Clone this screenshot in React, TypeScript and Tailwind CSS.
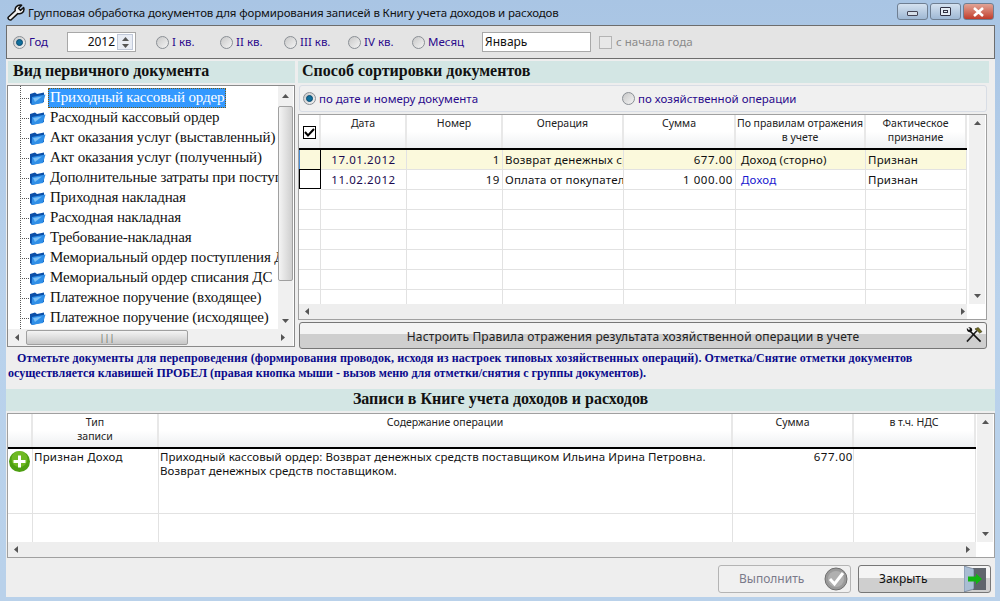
import React from "react";

const treeItems = [
  "Приходный кассовый ордер",
  "Расходный кассовый ордер",
  "Акт оказания услуг (выставленный)",
  "Акт оказания услуг (полученный)",
  "Дополнительные затраты при поступлении",
  "Приходная накладная",
  "Расходная накладная",
  "Требование-накладная",
  "Мемориальный ордер поступления ДС",
  "Мемориальный ордер списания ДС",
  "Платежное поручение (входящее)",
  "Платежное поручение (исходящее)",
];

function Radio({ on, label, className }: { on?: boolean; label: string; className?: string }) {
  return (
    <div className={"flex items-center gap-[3px] text-[11.5px] text-[#2a0a8c] whitespace-nowrap " + (className || "")}>
      <span className="w-[13px] h-[13px] rounded-full border border-[#8a8f95] bg-gradient-to-br from-[#c8c8c8] to-[#f4f4f4] flex items-center justify-center shrink-0">
        {on && <span className="w-[7px] h-[7px] rounded-full bg-[#0f6f9c] border border-[#0a4a70]" />}
      </span>
      <span>{label}</span>
    </div>
  );
}

function Arrow({ dir }: { dir: "up" | "down" | "left" | "right" }) {
  const pts = { up: "0,4 7,4 3.5,0", down: "0,0 7,0 3.5,4", left: "4,0 4,7 0,3.5", right: "0,0 0,7 4,3.5" }[dir];
  const vert = dir === "up" || dir === "down";
  return (
    <svg width={vert ? 7 : 4} height={vert ? 4 : 7} viewBox={vert ? "0 0 7 4" : "0 0 4 7"}>
      <polygon points={pts} fill="#555" />
    </svg>
  );
}

function Folder() {
  return (
    <svg width="17" height="15" viewBox="0 0 17 15" className="shrink-0">
      <path d="M1 3 L6 1.5 L8 3 L15 1.5 L15 11 L3 14 L1 12 Z" fill="#0b4fa8" />
      <path d="M3 6 L16.5 3.5 L14 12 L2.5 14 Z" fill="#2f8fe8" />
      <path d="M4 7 L13 5.5 L6 11 Z" fill="#7cc0f5" />
    </svg>
  );
}

function Tree() {
  return (
    <div className="w-[288px] h-[262px] mt-[2px] ml-px border border-[#8a8a8a] bg-white flex flex-col">
      <div className="flex h-[243px]">
        <div className="w-[270px] overflow-hidden pt-[2px] relative font-['Liberation_Serif'] text-[15px] tracking-[-0.15px] text-[#111]">
          <div className="absolute left-[12px] top-0 h-[243px] border-l border-dotted border-[#555]" />
          {treeItems.map((t, i) => (
            <div key={t} className="h-[20px] flex items-center whitespace-nowrap">
              <div className="w-[9px] ml-[12px] border-t border-dotted border-[#555] shrink-0" />
              <Folder />
              <span
                className={
                  "ml-[2px] px-[2px] h-[20px] leading-[19px] " +
                  (i === 0 ? "bg-[#3399ff] text-white outline-1 outline-dotted outline-[#7a5a10] -outline-offset-1" : "")
                }
              >
                {t}
              </span>
            </div>
          ))}
        </div>
        <div className="w-[15px] ml-auto mr-px bg-[#f0f0f0] flex flex-col items-center">
          <div className="h-[20px] flex items-center justify-center"><Arrow dir="up" /></div>
          <div className="w-[15px] h-[175px] rounded-[2px] border border-[#a0a0a0] bg-gradient-to-r from-[#f4f4f4] to-[#cfcfcf]" />
          <div className="mt-auto h-[17px] flex items-center justify-center"><Arrow dir="down" /></div>
        </div>
      </div>
      <div className="h-[17px] bg-[#f0f0f0] flex items-center mr-[1px]">
        <div className="w-[18px] flex justify-center"><Arrow dir="left" /></div>
        <div className="w-[162px] h-[15px] rounded-[2px] border border-[#a0a0a0] bg-gradient-to-b from-[#f4f4f4] to-[#c8c8c8] flex items-center justify-center text-[9px] leading-none text-[#666]">
          |||
        </div>
        <div className="ml-auto w-[20px] flex justify-center"><Arrow dir="right" /></div>
      </div>
    </div>
  );
}

function HeadCell({ children, className }: { children?: React.ReactNode; className?: string }) {
  return (
    <div className={"border-r-2 border-[#e8e8e8] bg-gradient-to-b from-white via-white to-[#eef0f2] text-center text-[10.5px] leading-[14px] pt-[1px] text-[#222] overflow-hidden " + (className || "")}>
      {children}
    </div>
  );
}

function Cell({ children, className }: { children?: React.ReactNode; className?: string }) {
  return (
    <div className={"border-r border-b border-[#e2e2e2] h-[20px] leading-[19px] text-[11.5px] whitespace-nowrap overflow-hidden " + (className || "tracking-[0.2px] text-[#111]")}>
      {children}
    </div>
  );
}

function VBar({ className }: { className?: string }) {
  return (
    <div className={"w-[16px] bg-[#f0f0f0] flex flex-col items-center justify-between py-[6px] " + (className || "")}>
      <Arrow dir="up" />
      <Arrow dir="down" />
    </div>
  );
}

function HBar({ className }: { className?: string }) {
  return (
    <div className={"h-[15px] bg-[#eeeeee] flex items-center justify-between shrink-0 " + (className || "")}>
      <Arrow dir="left" />
      <Arrow dir="right" />
    </div>
  );
}

function DocGrid() {
  const cols = "grid grid-cols-[22px_86px_96px_121px_112px_130px_101px]";
  const rows = [
    { d: "17.01.2012", n: "1", o: "Возврат денежных средств поставщику", s: "677.00", r: "Доход (сторно)", f: "Признан", hl: true },
    { d: "11.02.2012", n: "19", o: "Оплата от покупателя", s: "1 000.00", r: "Доход", f: "Признан", hl: false },
  ];
  return (
    <div className="w-[689px] h-[206px] mt-[2px] border border-[#a0a0a0] bg-white flex flex-col">
      <div className="flex flex-1 min-h-0">
        <div className="w-[668px]">
          <div className={cols + " h-[33px]"}>
            <HeadCell className="flex items-center justify-center pt-0">
              <span className="w-[13px] h-[13px] border border-black bg-white flex items-center justify-center">
                <svg width="11" height="9" viewBox="0 0 11 9"><path d="M1 4 L4 7.5 L10 1" stroke="#000" strokeWidth="2" fill="none" /></svg>
              </span>
            </HeadCell>
            <HeadCell>Дата</HeadCell>
            <HeadCell>Номер</HeadCell>
            <HeadCell>Операция</HeadCell>
            <HeadCell>Сумма</HeadCell>
            <HeadCell>По правилам отражения<br />в учете</HeadCell>
            <HeadCell>Фактическое<br />признание</HeadCell>
          </div>
          <div className="border-t-2 border-black" />
          {rows.map((r) => (
            <div key={r.d} className={cols + " " + (r.hl ? "bg-[#fbf9dc] border-b border-[#4a90d9] h-[20px]" : "")}>
              <div className={r.hl ? "h-[19px] border-l border-l-[#4a90d9] border-r border-r-black" : "h-[20px] border border-black mt-[-1px] bg-white"} />
              <Cell className="text-center text-[#1a0a50] tracking-[0.55px]">{r.d}</Cell>
              <Cell className="text-right pr-[2px] text-[#111] tracking-[0.55px]">{r.n}</Cell>
              <Cell className="pl-[2px] text-[#111] tracking-[0.2px]">{r.o}</Cell>
              <Cell className="text-right pr-[2px] text-[#111] tracking-[0.55px]">{r.s}</Cell>
              <Cell className={"pl-[5px] tracking-[0.2px] " + (r.hl ? "text-[#111]" : "text-[#1a1ad0]")}>{r.r}</Cell>
              <Cell className="pl-[2px] text-[#111] tracking-[0.2px]">{r.f}</Cell>
            </div>
          ))}
          {[0, 1, 2, 3, 4, 5].map((i) => (
            <div key={i} className={cols}>
              {[0, 1, 2, 3, 4, 5, 6].map((j) => <Cell key={j} />)}
            </div>
          ))}
        </div>
        <VBar className="ml-[2px]" />
      </div>
      <HBar className="mr-[19px] pl-[6px] pr-[2px]" />
    </div>
  );
}

function RecGrid() {
  const cols = "grid grid-cols-[25px_126px_574px_121px_122px]";
  const txt = "border-r border-[#e2e2e2] text-[11.5px] leading-[14px] pt-[1px] text-[#111]";
  return (
    <div className="w-[988px] h-[145px] mt-[2px] ml-px border border-[#a0a0a0] bg-white flex flex-col">
      <div className="flex flex-1 min-h-0">
        <div className="w-[968px] overflow-hidden">
          <div className={cols + " h-[33px]"}>
            <HeadCell />
            <HeadCell>Тип<br />записи</HeadCell>
            <HeadCell>Содержание операции</HeadCell>
            <HeadCell>Сумма</HeadCell>
            <HeadCell>в т.ч. НДС</HeadCell>
          </div>
          <div className="border-t-2 border-black" />
          <div className={cols + " h-[65px] border-b border-[#e2e2e2]"}>
            <div className="border-r border-[#e2e2e2] pl-[1px] pt-[2px]">
              <svg width="21" height="21" viewBox="0 0 21 21">
                <circle cx="10.5" cy="10.5" r="10.5" fill="#4e9f12" />
                <circle cx="10.5" cy="8" r="8" fill="#7ec52a" opacity="0.7" />
                <path d="M9 4.5h3v4.5h4.5v3H12v4.5H9V12H4.5V9H9z" fill="#fff" />
              </svg>
            </div>
            <div className={txt + " pl-[1px] tracking-[0.2px]"}>Признан Доход</div>
            <div className={txt + " pl-[1px] tracking-[0.08px]"}>
              Приходный кассовый ордер: Возврат денежных средств поставщиком Ильина Ирина Петровна.<br />
              Возврат денежных средств поставщиком.
            </div>
            <div className={txt + " text-right tracking-[0.55px]"}>677.00</div>
            <div className="border-r border-[#e2e2e2]" />
          </div>
          <div className={cols + " h-[28px]"}>
            {[0, 1, 2, 3, 4].map((j) => <div key={j} className="border-r border-[#e2e2e2]" />)}
          </div>
        </div>
        <VBar className="ml-auto mr-px" />
      </div>
      <HBar className="mr-[18px] pl-[6px] pr-[6px]" />
    </div>
  );
}

function Wrench() {
  return (
    <svg width="18" height="17" viewBox="0 0 18 17" className="shrink-0">
      <path
        d="M1.2 13.2 L8.2 6.8 C7.6 3.8 9.8 0.8 13.6 0.9 L14.6 1.2 L11.6 4.2 L13.4 6.4 L16.6 3.6 L17 5 C17.2 8.4 13.8 10.6 10.8 9.6 L4.2 15.8 C3 16.6 0.4 15 1.2 13.2 Z"
        fill="#f2f2f2"
        stroke="#111"
        strokeWidth="1.5"
        strokeLinejoin="round"
      />
    </svg>
  );
}

function WinBtn({ children, className }: { children: React.ReactNode; className?: string }) {
  return (
    <div className={"w-[31px] h-[17px] rounded-[3px] border border-[#6f7f92] flex items-center justify-center " + (className || "")}>
      {children}
    </div>
  );
}

export default function App() {
  return (
    <div className="w-[1000px] h-[601px] bg-gradient-to-b from-[#a9c5e4] via-[#b9d2ec] to-[#b9d1ea] font-['Noto_Sans','Liberation_Sans',sans-serif] overflow-hidden flex flex-col">
      <div className="h-[25px] flex items-center pl-[7px] pr-[6px] shrink-0">
        <Wrench />
        <span className="ml-[3px] text-[11.5px] text-[#111] tracking-[-0.13px] whitespace-nowrap">
          Групповая обработка документов для формирования записей в Книгу учета доходов и расходов
        </span>
        <div className="ml-auto flex gap-[2px] mt-[-2px]">
          <WinBtn className="bg-gradient-to-b from-[#d5e2f0] to-[#9fb8d4]">
            <span className="w-[11px] h-[5px] mt-[4px] border border-[#445] bg-[#d6dfe9] rounded-[1px]" />
          </WinBtn>
          <WinBtn className="bg-gradient-to-b from-[#d5e2f0] to-[#9fb8d4]">
            <span className="w-[11px] h-[9px] border border-[#334] bg-[#e4ecf4] rounded-[1px] flex items-center justify-center">
              <span className="w-[5px] h-[3px] border border-[#334]" />
            </span>
          </WinBtn>
          <WinBtn className="border-[#6e2a22] bg-gradient-to-b from-[#e0a396] to-[#c03a2a]">
            <svg width="13" height="10" viewBox="0 0 13 10"><path d="M2 1 L11 9 M11 1 L2 9" stroke="#fff" strokeWidth="2.6" /></svg>
          </WinBtn>
        </div>
      </div>

      <div className="mx-[6px] w-[989px] h-[572px] bg-[#eeeeee] flex flex-col shrink-0">
        <div className="h-[34px] border border-[#6d6d6d] bg-[#e4e4e4] flex items-center pl-[6px] shrink-0">
          <Radio on label="Год" />
          <div className="ml-[19px] w-[69px] h-[20px] border border-[#a8a8a8] bg-white flex items-center justify-end">
            <span className="text-[12px] text-[#111] pr-[2px]">2012</span>
            <div className="w-[16px] h-[16px] mr-[2px] flex flex-col items-center border border-[#c0c8d8] bg-[#e8ecf4]">
              <div className="h-[7px] flex items-center"><Arrow dir="up" /></div>
              <div className="h-[7px] flex items-center"><Arrow dir="down" /></div>
            </div>
          </div>
          <Radio label="I кв." className="ml-[20px] w-[64px]" />
          <Radio label="II кв." className="w-[64px]" />
          <Radio label="III кв." className="w-[64px]" />
          <Radio label="IV кв." className="w-[64px]" />
          <Radio label="Месяц" className="w-[70px]" />
          <div className="w-[109px] h-[20px] border border-[#a8a8a8] bg-white text-[12px] text-[#111] leading-[18px] pl-[2px]">Январь</div>
          <span className="ml-[8px] w-[13px] h-[13px] border border-[#b4b4b4] bg-[#e8e8e8]" />
          <span className="ml-[4px] text-[11.5px] text-[#8a8a8a]">с начала года</span>
        </div>

        <div className="flex">
          <div className="w-[292px] shrink-0">
            <div className="h-[22px] mt-[2px] ml-[2px] w-[287px] bg-[#d3e6e4] font-['Liberation_Serif'] font-bold text-[16px] leading-[20px] pl-[5px] text-[#111]">
              Вид первичного документа
            </div>
            <Tree />
          </div>
          <div className="w-[691px]">
            <div className="h-[22px] mt-[2px] bg-[#d3e6e4] font-['Liberation_Serif'] font-bold text-[16px] leading-[20px] pl-[4px] text-[#111]">
              Способ сортировки документов
            </div>
            <div className="h-[27px] mt-[2px] ml-px w-[688px] border border-[#d8dde5] rounded-[3px] bg-[#f0f0f0] flex items-center pl-[3px]">
              <Radio on label="по дате и номеру документа" />
              <Radio label="по хозяйственной операции" className="ml-[144px]" />
            </div>
            <DocGrid />
            <div className="h-[27px] mt-[2px] ml-px w-[688px] border border-[#777] rounded-[3px] bg-gradient-to-b from-[#f4f4f4] from-45% to-[#cfcfcf] to-45% flex items-center text-[12px] text-[#222] relative">
              <span className="flex-1 text-center pr-[20px] pt-[2px] tracking-[0.14px]">Настроить Правила отражения результата хозяйственной операции в учете</span>
              <svg width="18" height="16" viewBox="0 0 18 17" className="absolute right-[3px] top-[4px]">
                <path d="M10 2 L13.5 0.5 L17.5 5 L15 6.5 L13 4.5 Z" fill="#6f6a1e" stroke="#2a2a10" strokeWidth="0.6" />
                <path d="M12 4 L1.5 15.5" stroke="#222" strokeWidth="1.7" />
                <path d="M16 15.5 L5 4.5" stroke="#111" strokeWidth="1.8" />
                <path d="M5.5 5.5 C2.5 6 0.8 3.5 1.5 1 L3.5 3.2 L5 2 L3 0.4 C6 -0.2 7.6 2 7 4 Z" fill="#111" />
              </svg>
            </div>
          </div>
        </div>

        <div className="mt-[2px] h-[38px] pl-[2px] font-['Liberation_Serif'] font-bold text-[12px] leading-[15px] text-[#0a0a8c]">
          <div className="pl-[9px] whitespace-nowrap tracking-[0.09px]">Отметьте документы для перепроведения (формирования проводок, исходя из настроек типовых хозяйственных операций). Отметка/Снятие отметки документов</div>
          <div className="whitespace-nowrap tracking-[0.01px]">осуществляется клавишей ПРОБЕЛ (правая кнопка мыши - вызов меню для отметки/снятия с группы документов).</div>
        </div>

        <div className="h-[22px] bg-[#d3e6e4] font-['Liberation_Serif'] font-bold text-[16px] leading-[20px] text-center text-[#111] shrink-0">
          Записи в Книге учета доходов и расходов
        </div>
        <RecGrid />

        <div className="flex justify-end gap-[7px] mt-[7px] pr-[4px]">
          <div className="w-[133px] h-[28px] rounded-[3px] border border-[#b4b4b4] bg-[#f0f0f0] flex items-center text-[12px] text-[#7a7a8a] relative">
            <span className="ml-[20px]">Выполнить</span>
            <svg width="24" height="24" viewBox="0 0 24 24" className="absolute right-[2px] top-[1px]">
              <circle cx="12" cy="12" r="11" fill="#9a9a9a" stroke="#6f6f6f" />
              <circle cx="12" cy="12" r="8" fill="#b0b0b0" />
              <path d="M6 12 L10.5 17 L19 6" stroke="#fff" strokeWidth="3" fill="none" />
            </svg>
          </div>
          <div className="w-[133px] h-[28px] rounded-[3px] border border-[#777] bg-gradient-to-b from-[#f4f4f4] from-45% to-[#cfcfcf] to-45% flex items-center text-[12px] text-[#111] relative">
            <span className="ml-[20px]">Закрыть</span>
            <svg width="22" height="26" viewBox="0 0 22 26" className="absolute right-[4px] top-0 shrink-0">
              <rect x="9" y="2" width="13" height="22" fill="#60656c" />
              <path d="M0 0 L10 3 L10 23 L0 26 Z" fill="#a9bdd3" stroke="#5a6a80" strokeWidth="0.6" />
              <path d="M4 10.5 H12 V7.5 L18 13 L12 18.5 V15.5 H4 Z" fill="#12b512" />
            </svg>
          </div>
        </div>
      </div>
    </div>
  );
}
